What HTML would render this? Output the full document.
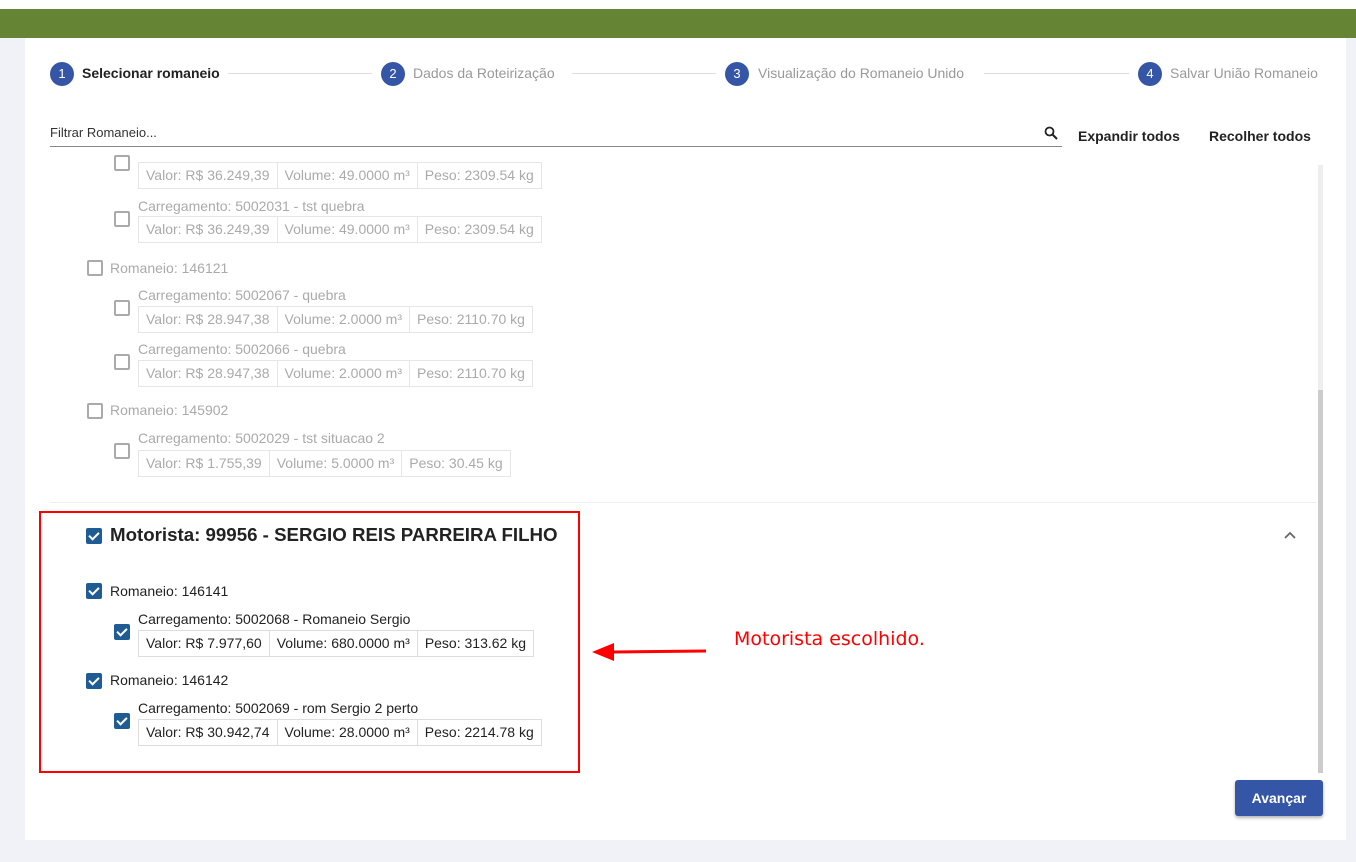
<!DOCTYPE html>
<html><head><meta charset="utf-8">
<style>
*{box-sizing:border-box;margin:0;padding:0}
body{width:1356px;height:862px;background:#f1f2f7;position:relative;overflow:hidden;font-family:"Liberation Sans",sans-serif;font-size:14px;color:#222}
.a{position:absolute;white-space:nowrap}
.top{left:0;top:0;width:1356px;height:9px;background:#fff}
.green{left:0;top:9px;width:1356px;height:29px;background:#658535}
.panel{left:25px;top:38px;width:1321px;height:802px;background:#fff}
.circ{width:24px;height:24px;border-radius:50%;background:#3556a6;color:#fff;font-size:13px;text-align:center;line-height:24px}
.line{height:1px;background:#ddd}
.st{font-size:14px;color:#999}
.cb{width:16px;height:16px;border:2px solid #aaa;border-radius:2px;background:#fff}
.cbc{width:16px;height:16px;border-radius:2px;background:#1f5c94}
.cbc:after{content:"";position:absolute;left:5px;top:2px;width:4px;height:8px;border:solid #fff;border-width:0 2px 2px 0;transform:rotate(45deg)}
.g{color:#aaa}
.cells{display:flex;height:27px}
.cells span{border:1px solid #ddd;padding:0 7px;line-height:25px;margin-right:-1px}
.g .cells span{border-color:#e6e6e6}
</style></head><body>
<div class="a top"></div>
<div class="a green"></div>
<div class="a panel"></div>

<div class="a circ" style="left:50px;top:62px">1</div>
<div class="a" style="left:82px;top:65px;font-weight:bold;font-size:14px;color:#222">Selecionar romaneio</div>
<div class="a line" style="left:228px;top:73px;width:144px"></div>
<div class="a circ" style="left:381px;top:62px">2</div>
<div class="a st" style="left:413px;top:65px">Dados da Roteirização</div>
<div class="a line" style="left:572px;top:73px;width:144px"></div>
<div class="a circ" style="left:725px;top:62px">3</div>
<div class="a st" style="left:758px;top:65px">Visualização do Romaneio Unido</div>
<div class="a line" style="left:984px;top:73px;width:145px"></div>
<div class="a circ" style="left:1138px;top:62px">4</div>
<div class="a st" style="left:1170px;top:65px">Salvar União Romaneio</div>

<div class="a" style="left:50px;top:125px;font-size:13px;color:#333">Filtrar Romaneio...</div>
<div class="a" style="left:50px;top:146px;width:1012px;height:1px;background:#888"></div>
<svg class="a" style="left:1044px;top:126px" width="14" height="14" viewBox="0 0 14 14"><circle cx="5.5" cy="5.5" r="4" fill="none" stroke="#222" stroke-width="1.8"/><path d="M8.5 8.5L13 13" stroke="#222" stroke-width="2"/></svg>
<div class="a" style="left:1078px;top:128px;font-weight:bold;color:#222">Expandir todos</div>
<div class="a" style="left:1209px;top:128px;font-weight:bold;color:#222">Recolher todos</div>

<div class="a" style="left:1318px;top:165px;width:5px;height:225px;background:#eee"></div>
<div class="a" style="left:1318px;top:390px;width:5px;height:383px;background:#ccc"></div>

<div class="a g" style="left:0;top:0">
<div class="a cb" style="left:114px;top:155px"></div>
<div class="a" style="left:138px;top:162px"><div class="cells"><span>Valor: R$ 36.249,39</span><span>Volume: 49.0000 m³</span><span>Peso: 2309.54 kg</span></div></div>
<div class="a" style="left:138px;top:198px">Carregamento: 5002031 - tst quebra</div>
<div class="a cb" style="left:114px;top:211px"></div>
<div class="a" style="left:138px;top:216px"><div class="cells"><span>Valor: R$ 36.249,39</span><span>Volume: 49.0000 m³</span><span>Peso: 2309.54 kg</span></div></div>

<div class="a cb" style="left:87px;top:260px"></div>
<div class="a" style="left:110px;top:260px">Romaneio: 146121</div>
<div class="a" style="left:138px;top:287px">Carregamento: 5002067 - quebra</div>
<div class="a cb" style="left:114px;top:300px"></div>
<div class="a" style="left:138px;top:306px"><div class="cells"><span>Valor: R$ 28.947,38</span><span>Volume: 2.0000 m³</span><span>Peso: 2110.70 kg</span></div></div>
<div class="a" style="left:138px;top:341px">Carregamento: 5002066 - quebra</div>
<div class="a cb" style="left:114px;top:354px"></div>
<div class="a" style="left:138px;top:360px"><div class="cells"><span>Valor: R$ 28.947,38</span><span>Volume: 2.0000 m³</span><span>Peso: 2110.70 kg</span></div></div>

<div class="a cb" style="left:87px;top:403px"></div>
<div class="a" style="left:110px;top:402px">Romaneio: 145902</div>
<div class="a" style="left:138px;top:430px">Carregamento: 5002029 - tst situacao 2</div>
<div class="a cb" style="left:114px;top:443px"></div>
<div class="a" style="left:138px;top:450px"><div class="cells"><span>Valor: R$ 1.755,39</span><span>Volume: 5.0000 m³</span><span>Peso: 30.45 kg</span></div></div>
</div>
<div class="a" style="left:50px;top:502px;width:1266px;height:1px;background:#eee"></div>

<div class="a cbc" style="left:86px;top:528px"></div>
<div class="a" style="left:110px;top:524px;font-size:18.7px;font-weight:bold;color:#222">Motorista: 99956 - SERGIO REIS PARREIRA FILHO</div>
<svg class="a" style="left:1283px;top:530px" width="14" height="10" viewBox="0 0 14 10"><path d="M2 8L7 3L12 8" fill="none" stroke="#666" stroke-width="1.8"/></svg>

<div class="a cbc" style="left:86px;top:583px"></div>
<div class="a" style="left:110px;top:583px">Romaneio: 146141</div>
<div class="a" style="left:138px;top:611px">Carregamento: 5002068 - Romaneio Sergio</div>
<div class="a cbc" style="left:114px;top:624px"></div>
<div class="a" style="left:138px;top:630px"><div class="cells"><span>Valor: R$ 7.977,60</span><span>Volume: 680.0000 m³</span><span>Peso: 313.62 kg</span></div></div>
<div class="a cbc" style="left:86px;top:673px"></div>
<div class="a" style="left:110px;top:672px">Romaneio: 146142</div>
<div class="a" style="left:138px;top:700px">Carregamento: 5002069 - rom Sergio 2 perto</div>
<div class="a cbc" style="left:114px;top:713px"></div>
<div class="a" style="left:138px;top:719px"><div class="cells"><span>Valor: R$ 30.942,74</span><span>Volume: 28.0000 m³</span><span>Peso: 2214.78 kg</span></div></div>

<div class="a" style="left:39px;top:511px;width:541px;height:262px;border:2px solid #f00"></div>

<svg class="a" style="left:590px;top:640px" width="120" height="24" viewBox="0 0 120 24"><path d="M24 12L116 11" stroke="#f00" stroke-width="3"/><path d="M2 12L24 3L24 21Z" fill="#f00"/></svg>
<div class="a" style="left:734px;top:628px;color:#f00;font-size:19px;font-family:'DejaVu Sans',sans-serif">Motorista escolhido.</div>

<div class="a" style="left:1235px;top:780px;width:88px;height:36px;background:#3556a6;border-radius:3px;color:#fff;font-weight:bold;text-align:center;line-height:36px;box-shadow:0 2px 3px rgba(0,0,0,.3)">Avançar</div>
</body></html>
